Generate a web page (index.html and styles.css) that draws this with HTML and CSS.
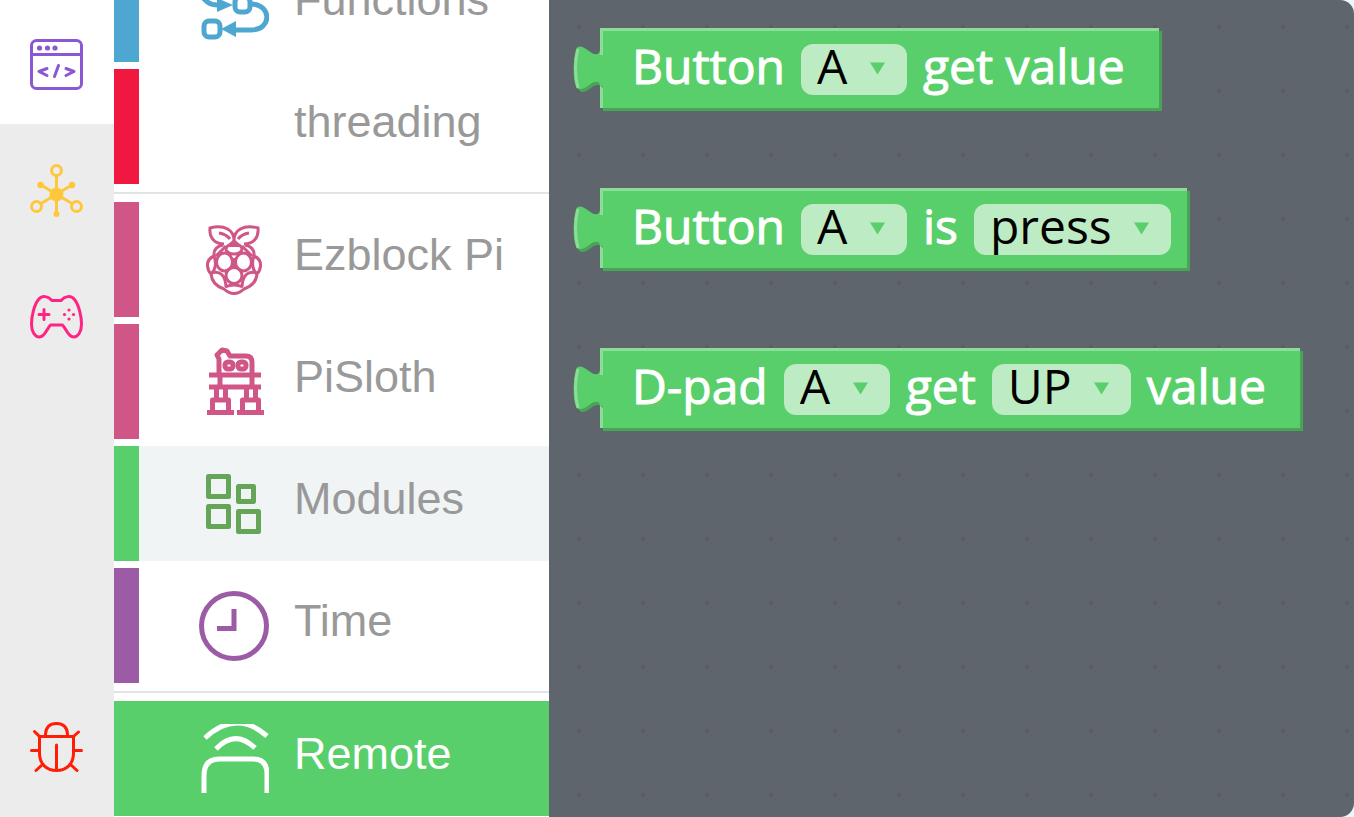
FILE: index.html
```html
<!DOCTYPE html>
<html lang="en">
<head>
<meta charset="utf-8">
<title>Ezblock Studio</title>
<link rel="stylesheet" href="styles.css">
</head>
<body>
<div class="app">
  <nav class="rail" aria-label="Tools">
    <button class="rail-item rail-active code" aria-label="Code">
      <svg class="rail-icon" viewBox="0 0 53 53"><rect x="1.5" y="1.5" width="50" height="48" rx="5"/><path d="M2 15.500H51M17 29.500L9 32.500L17 36.500M28.500 26.500L24.500 37.500M36 29.500L44 32.500L36 36.500"/><g class="solid"><circle cx="9.500" cy="9" r="2.600"/><circle cx="17.500" cy="9" r="2.600"/><circle cx="25" cy="9" r="2.600"/></g></svg>
    </button>
    <button class="rail-item network" aria-label="Devices">
      <svg class="rail-icon" viewBox="0 0 53 53"><path d="M26.500 12V50M11 21L42 39.500M42 21L11 39.500"/><g class="solid"><circle cx="26.500" cy="30.500" r="7"/><circle cx="10.500" cy="21" r="3.200"/><circle cx="42" cy="21" r="3.200"/><circle cx="26.500" cy="50" r="3"/></g><g class="hollow"><circle cx="26.500" cy="6.500" r="5"/><circle cx="6.500" cy="42.500" r="5"/><circle cx="46.500" cy="42.500" r="5"/></g></svg>
    </button>
    <button class="rail-item gamepad" aria-label="Controller">
      <svg class="rail-icon" viewBox="0 0 53 53"><path d="M22 10.500H31C35 6 41 5 44.500 9.500C49 15 51.500 27 51.500 34C51.500 42 48 47 43.500 47C38 47 36.500 39 32.500 35H20.500C16.500 39 15 47 9.500 47C5 47 1.500 42 1.500 34C1.500 27 4 15 8.500 9.500C12 5 18 6 22 10.500ZM14 19.500V29.500M9 24.500H19"/><g class="solid"><circle cx="34.500" cy="24.500" r="1.600"/><circle cx="39" cy="20" r="1.600"/><circle cx="43.500" cy="24.500" r="1.600"/><circle cx="39" cy="29" r="1.600"/></g></svg>
    </button>
    <button class="rail-item rail-last bug" aria-label="Debug">
      <svg class="rail-icon" viewBox="0 0 53 53"><path d="M15.500 14V12C16 5 20 1.500 26.500 1.500S37 5 37.500 12V14M9.500 14.500H43.500V31C43.500 42 36.500 48.500 26.500 48.500S9.500 42 9.500 31ZM26.500 23V48M1.500 28.500H9M44 28.500H51.500M4.500 9.500L9.500 14.500M48.500 10L43.500 14.500M6 48.500L13 42M47 48.500L40 42"/></svg>
    </button>
  </nav>

  <aside class="toolbox" aria-label="Block categories">
    <div class="group">
      <button class="category blue">
        <svg class="category-icon" viewBox="0 0 70 70"><rect x="5" y="2" width="15" height="15" rx="5"/><path d="M4 19C0 26 8 35 18 35M20 9H54M53 34C73 35 73 60 52 60H36"/><rect x="36" y="27" width="15" height="15" rx="5"/><rect x="5" y="51" width="16" height="16" rx="5"/><path class="solid" d="M18 28L34 35L18 42ZM37 51L22 59L37 67Z"/></svg>
        <span class="category-name">Functions</span>
      </button>
      <button class="category red">
        <span class="category-icon"></span>
        <span class="category-name">threading</span>
      </button>
    </div>
    <div class="group">
      <button class="category pink">
        <svg class="category-icon berry" viewBox="0 0 70 70"><path d="M35 17C36 5 25 -1 11 3C10 13 16 19 25 19M35 17C34 5 45 -1 59 3C60 13 54 19 45 19M20 8Q27 9 31 14M50 8Q43 9 39 14"/><path d="M24 20Q14 22 15 31Q8 34 8.500 41Q9 46 12 49Q13 60 25 64Q35 73 45 64Q57 60 58 49Q61 46 61.500 41Q62 34 55 31Q56 22 46 20M27 21L17 31M43 21L53 31"/><path class="solid" d="M35 14L26 22H44Z"/><ellipse cx="35" cy="24" rx="8" ry="5"/><ellipse cx="25.500" cy="37" rx="8" ry="9"/><ellipse cx="44.500" cy="37" rx="8" ry="9"/><circle cx="35" cy="50.500" r="8"/><path d="M15 31Q19 42 12 49M55 31Q51 42 58 49M12 48Q26 44 27 62M58 48Q44 44 43 62M26 62Q35 58 44 62M35 33V42"/></svg>
        <span class="category-name">Ezblock Pi</span>
      </button>
      <button class="category pink">
        <svg class="category-icon robot" viewBox="0 0 70 70"><path d="M20 27V12L18 8L23 3L28 4L31 9H47Q53 9 53 15V27M10 28H62M10 40H62M21 28V40M53 28V40M17.500 41V51M26.500 41V51M47.500 41V51M56.500 41V51M8 65.500H35M38 65.500H65"/><rect x="26" y="15" width="8" height="7" rx="3"/><rect x="39" y="15" width="8" height="7" rx="3"/><path d="M13.500 65V53H29.500V65M43.500 65V53H59.500V65"/></svg>
        <span class="category-name">PiSloth</span>
      </button>
      <button class="category green hovered">
        <svg class="category-icon modules" viewBox="0 0 70 70"><rect x="9.500" y="7.500" width="20" height="20"/><rect x="39.500" y="17.500" width="15" height="15"/><rect x="9.500" y="37.500" width="20" height="20"/><rect x="39.500" y="42.500" width="20" height="20"/></svg>
        <span class="category-name">Modules</span>
      </button>
      <button class="category purple">
        <svg class="category-icon" viewBox="0 0 70 70"><circle cx="35" cy="35" r="32.500"/><path d="M35 18V37.500H18"/></svg>
        <span class="category-name">Time</span>
      </button>
    </div>
    <div class="group">
      <button class="category green selected">
        <svg class="category-icon" viewBox="0 0 70 70"><path d="M5 69V52Q5 35 20 35H54Q68 35 68 50V69M17 25Q36 5 56 24M6 14Q37-15 68 12"/></svg>
        <span class="category-name">Remote</span>
      </button>
    </div>
  </aside>

  <main class="workspace">
    <div class="block">
      <svg class="tab" viewBox="0 0 34 60"><path class="tab-shade" d="M30 18V49C27 43 22 45 18 48C14 51 8 55 5 49C2 43 2 22 5 13Z"/><path class="tab-face" d="M30 15H27V10C26 16 21 15 16 11C10 7 5 4 3 10C0 19 0 40 3 46C6 52 12 48 16 45C20 42 27 39 27 46H30Z"/><path class="tab-light" d="M5 9Q0 28 5 48"/></svg>
      <label class="block-text" for="value-button">Button</label>
      <span class="field"><select id="value-button"><option>A</option></select><svg class="arrow" viewBox="0 0 16 13"><path d="M0 0H16L8 13Z"/></svg></span>
      <span class="block-text">get value</span>
    </div>
    <div class="block">
      <svg class="tab" viewBox="0 0 34 60"><path class="tab-shade" d="M30 18V49C27 43 22 45 18 48C14 51 8 55 5 49C2 43 2 22 5 13Z"/><path class="tab-face" d="M30 15H27V10C26 16 21 15 16 11C10 7 5 4 3 10C0 19 0 40 3 46C6 52 12 48 16 45C20 42 27 39 27 46H30Z"/><path class="tab-light" d="M5 9Q0 28 5 48"/></svg>
      <label class="block-text" for="state-button">Button</label>
      <span class="field"><select id="state-button"><option>A</option></select><svg class="arrow" viewBox="0 0 16 13"><path d="M0 0H16L8 13Z"/></svg></span>
      <label class="block-text" for="state">is</label>
      <span class="field"><select id="state"><option>press</option></select><svg class="arrow" viewBox="0 0 16 13"><path d="M0 0H16L8 13Z"/></svg></span>
    </div>
    <div class="block">
      <svg class="tab" viewBox="0 0 34 60"><path class="tab-shade" d="M30 18V49C27 43 22 45 18 48C14 51 8 55 5 49C2 43 2 22 5 13Z"/><path class="tab-face" d="M30 15H27V10C26 16 21 15 16 11C10 7 5 4 3 10C0 19 0 40 3 46C6 52 12 48 16 45C20 42 27 39 27 46H30Z"/><path class="tab-light" d="M5 9Q0 28 5 48"/></svg>
      <label class="block-text" for="dpad">D-pad</label>
      <span class="field"><select id="dpad"><option>A</option></select><svg class="arrow" viewBox="0 0 16 13"><path d="M0 0H16L8 13Z"/></svg></span>
      <label class="block-text" for="direction">get</label>
      <span class="field"><select id="direction"><option>UP</option></select><svg class="arrow" viewBox="0 0 16 13"><path d="M0 0H16L8 13Z"/></svg></span>
      <span class="block-text">value</span>
    </div>
  </main>
</div>
</body>
</html>
```
FILE: styles.css
```css
* { box-sizing: border-box; }
body { margin: 0; background: #f2f5f8; }
button { border: 0; padding: 0; margin: 0; background: none; font: inherit; color: inherit; }
svg { display: block; fill: none; stroke: currentColor; }
.solid { fill: currentColor; stroke: none; }

.app { display: flex; height: 100vh; overflow: hidden; }

.rail { flex: none; width: 114px; display: flex; flex-direction: column; padding-bottom: 9px; background: #ececec; }
.rail-item { height: 126px; flex: none; display: grid; place-items: center; padding-right: 2px; }
.rail-active { height: 124px; padding-top: 6px; background: #fff; }
.rail-last { margin-top: auto; }
.rail-icon { width: 53px; height: 53px; stroke-width: 3; stroke-linecap: round; stroke-linejoin: round; }
.rail-item:not(.rail-active) .rail-icon { margin-top: 6px; }
.hollow { fill: #ececec; }
.code { color: #8b58d3; }
.network { color: #ffc83c; }
.gamepad { color: #ff2382; }
.bug { color: #ff1e05; }

.toolbox { flex: none; width: 435px; display: flex; flex-direction: column; justify-content: flex-end; padding-bottom: 1px; background: #fff; font-family: "Liberation Sans", Arial, sans-serif; font-size: 45px; }
.group { flex: none; display: flex; flex-direction: column; gap: 7px; padding: 8px 0; border-top: 2px solid #e3e3e6; }
.group:last-child { padding-bottom: 0; }
.category { height: 115px; display: flex; align-items: center; gap: 25px; padding-left: 60px; border-left: 25px solid currentColor; text-align: left; }
.category-icon { flex: none; width: 70px; height: 70px; stroke-width: 5; }
.category-name { color: #999; line-height: 50px; padding-bottom: 10px; white-space: nowrap; }
.berry { stroke-width: 3; }
.robot { stroke-linejoin: round; }
.modules { color: #64a558; stroke-linejoin: round; }
.blue { color: #4da7d1; }
.red { color: #f01840; }
.pink { color: #d05687; }
.green { color: #59cf6b; }
.purple { color: #9b5ba5; }
.hovered { background: #f0f4f5; }
.selected { background: #59cf6b; }
.selected .category-icon, .selected .category-name { color: #fff; }

.workspace { flex: 1; min-width: 0; display: flex; flex-direction: column; align-items: flex-start; gap: 80px; padding: 28px 0 0 51px; border-radius: 0 14px 14px 0; background: #5f656c radial-gradient(circle, #5a5b63 2px, transparent 2px) -2px -5px / 64px 64px; font-family: "Open Sans", "Noto Sans", sans-serif; font-size: 48px; }
.block { position: relative; display: flex; align-items: flex-start; gap: 16px; padding: 16px 16px 13px 32px; background: #59cf6b; box-shadow: inset 3px 3px #8bdd97, 3px 3px #48a456; }
.block-text { color: #fff; -webkit-text-stroke: 1px #fff; line-height: 43px; white-space: nowrap; }
.block-text:last-child { padding-right: 18px; }
.tab { position: absolute; left: -27px; top: 12px; width: 34px; height: 60px; }
.tab-shade { fill: #48a456; stroke: none; clip-path: polygon(0 0, 27px 0, 27px 60px, 0 60px); }
.tab-face { fill: #59cf6b; stroke: none; }
.tab-light { stroke: #8bdd97; stroke-width: 3; }
.field { position: relative; display: block; height: 51px; border-radius: 12px; background: #bdebc4; }
select { appearance: none; display: block; height: 73px; margin: -15px 0 0; padding: 0 59px 0 16px; border: 0; background: none; color: #000; font: inherit; }
.arrow { position: absolute; right: 22px; top: 18px; width: 15px; height: 13px; fill: #59cf6b; stroke: none; pointer-events: none; }
```
